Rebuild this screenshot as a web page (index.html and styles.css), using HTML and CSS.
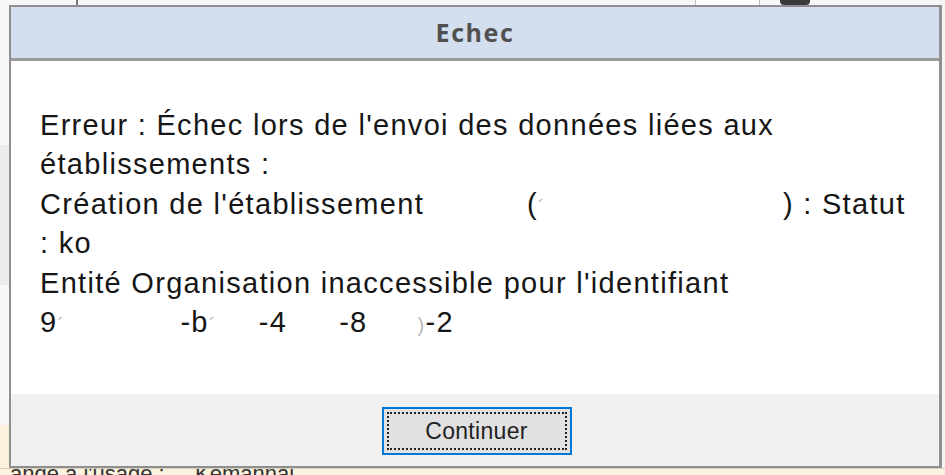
FILE: index.html
```html
<!DOCTYPE html>
<html lang="fr">
<head>
<meta charset="utf-8">
<title>Echec</title>
<link rel="stylesheet" href="styles.css">
</head>
<body>
<div class="page">
  <div class="top-strip">
    <span class="ts-tick"></span>
    <span class="ts-box"></span>
    <span class="ts-dark"></span>
  </div>
  <div class="middle">
    <div class="left-strip"></div>
    <div class="dialog">
      <div class="titlebar">Echec</div>
      <div class="content">
        <p class="msg">Erreur : Échec lors de l'envoi des données liées aux établissements :<br>Création de l'établissement<span class="gap g1"></span>(<span class="mark">´</span><span class="gap g2"></span>) : Statut : ko<br>Entité Organisation inaccessible pour l'identifiant<br>9<span class="mark">´</span><span class="gap g3"></span>-b<span class="mark">´</span><span class="gap g4"></span>-4<span class="gap g5"></span>-8<span class="gap g6"></span><span class="mark">)</span>-2</p>
      </div>
      <div class="footer">
        <button class="btn" type="button"><span class="btn-focus">Continuer</span></button>
      </div>
    </div>
    <div class="right-strip"></div>
  </div>
  <div class="bottom-strip"><span class="bs-a">ande à l'usage :</span><span class="bs-b">Kemannal</span></div>
</div>
</body>
</html>
```

FILE: styles.css
```css
* { box-sizing: border-box; }
html, body { margin: 0; padding: 0; }
body {
  width: 945px;
  height: 475px;
  overflow: hidden;
  background: #f3f3f3;
  font-family: "Liberation Sans", Arial, sans-serif;
}
.page {
  display: flex;
  flex-direction: column;
  width: 945px;
  height: 475px;
}
.top-strip {
  height: 5px;
  display: flex;
  align-items: stretch;
  background: #f7f7f7;
}
.ts-tick { width: 2px; background: #777; margin-left: 76px; }
.ts-box { width: 65px; background: #fff; border-left: 1px solid #bbb; border-right: 1px solid #bbb; margin-left: 617px; }
.ts-dark { width: 30px; background: #3a3a3a; border-radius: 0 0 4px 4px; margin-left: 20px; }
.middle {
  display: flex;
  height: 463px;
}
.left-strip {
  width: 9px;
  background: linear-gradient(to bottom, #f7f7f7 0, #f7f7f7 140px, #ececec 140px, #ececec 280px, #f7f7f7 280px, #f7f7f7 420px, #fbf1dc 420px);
}
.right-strip {
  width: 3px;
  background: #f4f4f4;
}
.dialog {
  width: 933px;
  display: flex;
  flex-direction: column;
  border: 2px solid #8f8f8f;
  border-right-width: 3px;
  background: #fff;
}
.titlebar {
  height: 54px;
  background: #d3dfee;
  border-bottom: 3px solid #9a9a9a;
  display: flex;
  align-items: center;
  justify-content: center;
  font-family: "Open Sans", "Liberation Sans", sans-serif;
  font-weight: 700;
  font-size: 25px;
  letter-spacing: 1.6px;
  color: #505050;
  padding-bottom: 1px;
}
.content {
  flex: 1;
  background: #fff;
  padding: 45px 0 0 29px;
}
.msg {
  margin: 0;
  font-size: 29px;
  letter-spacing: 1.3px;
  line-height: 39.4px;
  color: #161616;
  width: 878px;
}
.gap { display: inline-block; height: 1px; }
.g1 { width: 103px; }
.g2 { width: 237px; }
.g3 { width: 115px; }
.g4 { width: 42px; }
.g5 { width: 52px; }
.g6 { width: 50px; }
.mark { color: #b9b9b9; font-size: 20px; line-height: 20px; }
.footer {
  height: 72px;
  background: #f0f0f0;
  display: flex;
  align-items: center;
  justify-content: center;
  padding-top: 2px;
}
.btn {
  width: 190px;
  height: 48px;
  margin-left: 3px;
  border: 2px solid #0078d7;
  background: #e1e1e1;
  padding: 3px;
  font-family: "Liberation Sans", Arial, sans-serif;
  font-size: 23px;
  letter-spacing: 0.3px;
  color: #222;
  display: flex;
}
.btn-focus {
  flex: 1;
  border: 2px dotted #222;
  display: flex;
  align-items: center;
  justify-content: center;
}
.bottom-strip {
  flex: 1;
  background: #fbf3de;
  overflow: hidden;
  display: flex;
  font-size: 22px;
  line-height: 22px;
  color: #333;
  border-top: 1px solid #d8d0bc;
}
.bs-a { display: block; margin-top: -6px; margin-left: 10px; width: 185px; }
.bs-b { display: block; margin-top: -6px; }
```
